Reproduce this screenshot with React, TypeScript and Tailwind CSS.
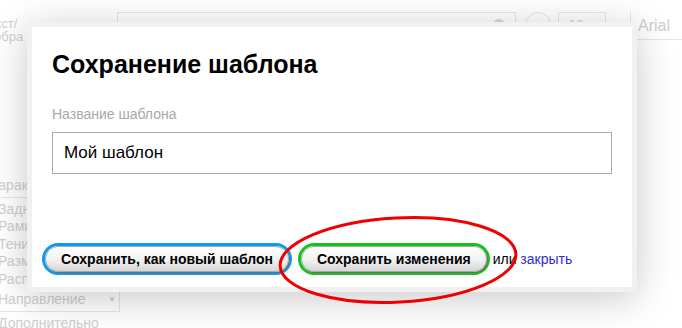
const font = "font-['Liberation_Sans',Arial,sans-serif]";

function Ring({ color, children }: { color: string; children: React.ReactNode }) {
  return (
    <span className={`inline-flex rounded-full border-[3px] ${color}`}>
      <button className="h-[26px] rounded-full border border-[#a8a8a8] bg-gradient-to-b from-white via-[#f3f3f3] to-[#d6d6d6] px-[15px] text-[14px] font-bold leading-none text-black shadow-[1px_1px_0_#6b6b6b]">
        {children}
      </button>
    </span>
  );
}

function SideItem({ children, cut = "ml-[-2px]" }: { children: React.ReactNode; cut?: string }) {
  return <div className={`h-[17.5px] whitespace-nowrap text-[14px] leading-[17px] ${cut}`}>{children}</div>;
}

export default function App() {
  return (
    <div className={`relative h-[328px] w-[682px] overflow-hidden bg-white ${font}`}>
      {/* faded page behind the dialog */}
      <div className="flex flex-col text-[#cfcfcf]">
        <div className="flex items-start pt-[12px]">
          <div className="ml-[-19px] w-[136px] pt-[5px] text-[13px] leading-[13px]">
            Текст/
            <br />
            изобра
          </div>
          <div className="relative flex h-[26px] w-[399px] items-center justify-end border border-[#e6e6e6] pr-[10px]">
            <span className="absolute left-[8px] top-[5px] text-[13px]">Д</span>
            <span className="h-[12px] w-[12px] rounded-full bg-[#c9dbea]" />
          </div>
          <div className="ml-[9px] h-[26px] w-[26px] rounded-full border border-[#e6e6e6]" />
          <div className="ml-[7px] flex h-[26px] w-[48px] items-center border border-[#e6e6e6] pl-[10px] text-[13px]">
            12
          </div>
          <div className="ml-[24px] flex h-[28px] flex-1 items-center border-b border-l border-[#e6e6e6] pl-[7px] text-[16px]">
            Arial
          </div>
        </div>
        <div className="mt-[134px] w-[120px]">
          <div className="border-b border-[#e6e6e6] pb-[2px]">
            <SideItem cut="ml-[-11px]">Характеристики</SideItem>
          </div>
          <div className="pt-[3px]">
            <SideItem>Задний фон</SideItem>
            <SideItem>Рамка</SideItem>
            <SideItem>Тени</SideItem>
            <SideItem>Размер</SideItem>
            <SideItem>Расположение</SideItem>
          </div>
          <div className="flex h-[24px] items-center justify-between border-b border-r border-[#e6e6e6] pr-[3px]">
            <SideItem>Направление</SideItem>
            <span className="text-[8px]">▼</span>
          </div>
          <div className="pt-[3px]">
            <SideItem>Дополнительно</SideItem>
          </div>
        </div>
      </div>

      {/* dialog */}
      <div className="absolute left-[27px] top-[22px] h-[270px] w-[610px] rounded-[4px] bg-[#f1f1f1] p-[5px] shadow-[0_6px_38px_rgba(0,0,0,0.22)]">
        <div className="flex h-full flex-col bg-white">
          <div className="px-[20px] pt-[23px]">
            <h1 className="text-[25px] font-bold leading-[29px] text-black">Сохранение шаблона</h1>
            <div className="mt-[27px] text-[14px] leading-[16px] text-[#a9a9a9]">Название шаблона</div>
            <div className="mt-[10px] flex h-[42px] items-center border border-[#aaaaaa] pl-[11px] text-[17px] text-black">
              Мой шаблон
            </div>
          </div>
          <div className="mt-auto flex items-center pb-[12px] pl-[10px]">
            <Ring color="border-[#0a9bf0]">Сохранить, как новый шаблон</Ring>
            <span className="ml-[6px]">
              <Ring color="border-[#12c41a]">Сохранить изменения</Ring>
            </span>
            <span className="ml-[3px] text-[14px] text-black">
              или <a className="text-[#2a2ae0]">закрыть</a>
            </span>
          </div>
        </div>
      </div>

      {/* red annotation */}
      <svg className="absolute left-[276px] top-[214px]" width="244" height="92" viewBox="0 0 244 92">
        <ellipse cx="122" cy="46" rx="118" ry="42" fill="none" stroke="#ee0000" strokeWidth="3" transform="rotate(-3 122 46)" />
      </svg>
    </div>
  );
}
